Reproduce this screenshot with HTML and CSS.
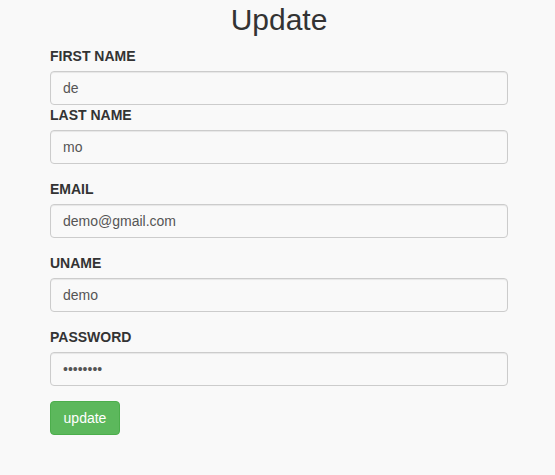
FILE: index.html
```html
<!DOCTYPE html>
<html>
<head>
<meta charset="utf-8">
<link rel="stylesheet" href="styles.css">
</head>
<body>
<div class="wrap">
  <h2 class="title">Update</h2>
  <form class="form">
    <label class="lbl">FIRST NAME</label>
    <input class="field" type="text" value="de">
    <label class="lbl">LAST NAME</label>
    <input class="field" type="text" value="mo">
    <div class="group">
      <label class="lbl">EMAIL</label>
      <input class="field" type="text" value="demo@gmail.com">
    </div>
    <div class="group">
      <label class="lbl">UNAME</label>
      <input class="field" type="text" value="demo">
    </div>
    <div class="group">
      <label class="lbl">PASSWORD</label>
      <input class="field" type="password" value="demodemo">
    </div>
    <button class="btn" type="button">update</button>
  </form>
</div>
</body>
</html>
```
FILE: styles.css
```css
* { box-sizing: border-box; }
html, body {
  margin: 0;
  padding: 0;
  background: #f9f9f9;
  font-family: "Liberation Sans", Arial, sans-serif;
  font-size: 14px;
  line-height: 20px;
  color: #333;
}
.wrap {
  width: 458px;
  margin-left: 50px;
}
.title {
  margin: 3px 0 10px;
  font-size: 30px;
  line-height: 33px;
  font-weight: 400;
  text-align: center;
  color: #333;
}
.form {
  display: flex;
  flex-direction: column;
  margin: 0;
}
.group {
  display: flex;
  flex-direction: column;
  margin-top: 15px;
}
.lbl {
  display: block;
  font-weight: 700;
  margin-bottom: 5px;
  line-height: 20px;
}
.field {
  display: block;
  width: 458px;
  height: 34px;
  padding: 6px 12px;
  font-family: "Liberation Sans", Arial, sans-serif;
  font-size: 14px;
  line-height: 20px;
  color: #555;
  background: #f9f9f9;
  border: 1px solid #ccc;
  border-radius: 4px;
  box-shadow: inset 0 1px 1px rgba(0,0,0,0.075);
  margin: 0;
  outline: none;
}
.btn {
  margin-top: 15px;
  align-self: flex-start;
  height: 34px;
  width: 70px;
  padding: 6px 12px;
  font-family: "Liberation Sans", Arial, sans-serif;
  font-size: 14px;
  line-height: 20px;
  color: #fff;
  background: #5cb85c;
  border: 1px solid #4cae4c;
  border-radius: 4px;
  cursor: pointer;
}
```
